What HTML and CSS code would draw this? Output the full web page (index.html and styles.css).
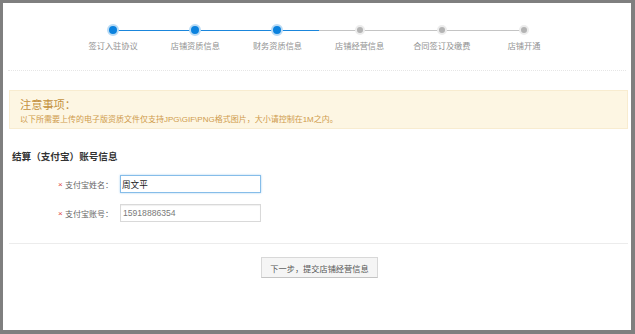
FILE: index.html
```html
<!DOCTYPE html>
<html lang="zh-CN">
<head>
    <meta charset="UTF-8">
    <meta name="viewport" content="width=device-width, initial-scale=1.0">
    <title>店铺入驻 - 财务资质信息</title>
    <link rel="stylesheet" href="styles.css">
</head>
<body>

    <div class="page">
        <!-- Progress steps -->
        <ul class="steps">
            <li class="step done"><span class="dot"></span><span class="step-label">签订入驻协议</span></li>
            <li class="step done"><span class="dot"></span><span class="step-label">店铺资质信息</span></li>
            <li class="step done current"><span class="dot"></span><span class="step-label">财务资质信息</span></li>
            <li class="step"><span class="dot"></span><span class="step-label">店铺经营信息</span></li>
            <li class="step"><span class="dot"></span><span class="step-label">合同签订及缴费</span></li>
            <li class="step"><span class="dot"></span><span class="step-label">店铺开通</span></li>
        </ul>

        <!-- Notice -->
        <div class="notice">
            <h3>注意事项：</h3>
            <p>以下所需要上传的电子版资质文件仅支持JPG\GIF\PNG格式图片，大小请控制在1M之内。</p>
        </div>

        <!-- Alipay account -->
        <h4 class="section-title">结算（支付宝）账号信息</h4>

        <div class="form-row first">
            <label for="alipayName"><i class="req">×</i>支付宝姓名：</label>
            <input type="text" id="alipayName" class="focused" value="周文平">
        </div>
        <div class="form-row">
            <label for="alipayAccount"><i class="req">×</i>支付宝账号：</label>
            <input type="text" id="alipayAccount" class="muted" value="15918886354">
        </div>

        <div class="divider"></div>

        <div class="actions">
            <button class="next-button">下一步，提交店铺经营信息</button>
        </div>
    </div>

</body>
</html>
```

FILE: styles.css
```css
* {
    box-sizing: border-box;
    margin: 0;
    padding: 0;
}

body {
    font-family: "Liberation Sans", "Noto Sans CJK SC", sans-serif;
    background-color: #7f7f7f;
    padding: 3px 4px 4px 3px;
    height: 334px;
    overflow: hidden;
}

.page {
    background-color: #ffffff;
    height: 327px;
}

/* Steps */
.steps {
    display: flex;
    list-style: none;
    height: 68px;
    margin: 0 5px;
    padding: 21px 0 0 64px;
    border-bottom: 1px dotted #e6e6e6;
}

.step {
    position: relative;
    width: 82.2px;
    display: flex;
    flex-direction: column;
    align-items: center;
}

.step::before,
.step::after {
    content: "";
    position: absolute;
    top: 5.5px;
    height: 1.5px;
    width: 50%;
    background-color: #c4c4c4;
}

.step::before {
    left: 0;
}

.step::after {
    left: 50%;
}

.step:first-child::before,
.step:last-child::after {
    display: none;
}

.step.done::before,
.step.done::after {
    background-color: #1a86dc;
}

.dot {
    position: relative;
    z-index: 1;
    width: 10px;
    height: 10px;
    margin: 1px 0;
    border-radius: 50%;
    background-color: #b3b3b3;
    border: 2px solid #ececec;
}

.step.done .dot {
    width: 12px;
    height: 12px;
    margin: 0;
    background-color: #0b82de;
    border: 2px solid #b9dbf5;
}

.step-label {
    margin-top: 5px;
    font-size: 8.2px;
    line-height: 12px;
    color: #919191;
    white-space: nowrap;
}

/* Notice */
.notice {
    height: 39px;
    margin: 19px 3px 0 6px;
    padding: 7px 10px 0;
    background-color: #fdf6e3;
    border: 1px solid #f8ecd0;
}

.notice h3 {
    font-size: 11.2px;
    line-height: 14px;
    font-weight: normal;
    color: #c4913e;
}

.notice p {
    margin-top: 2px;
    font-size: 8px;
    line-height: 11px;
    color: #cf9b4c;
    white-space: nowrap;
}

/* Form */
.section-title {
    margin: 21px 0 0 9px;
    font-size: 9.6px;
    line-height: 14px;
    color: #333333;
}

.form-row {
    display: flex;
    align-items: center;
    height: 18px;
    margin-top: 11px;
    padding-left: 55px;
}

.form-row label {
    display: flex;
    align-items: center;
    width: 62px;
    font-size: 8px;
    color: #666666;
}

.req {
    font-style: normal;
    width: 7px;
    font-size: 8px;
    color: #e0453a;
}

.form-row input {
    width: 141px;
    height: 18px;
    padding: 0 2px;
    font-family: "Liberation Sans", "Noto Sans CJK SC", sans-serif;
    font-size: 8.6px;
    color: #222222;
    border: 1px solid #d9d9d9;
    box-shadow: inset 0 1px 1px #f0f0f0;
    outline: none;
}

.form-row input.focused {
    padding-left: 1px;
    border-color: #86bde9;
    box-shadow: 0 0 2px #a9d0f0;
}

.form-row input.muted {
    color: #7a7a7a;
}

.divider {
    margin: 21px 3px 0 6px;
    border-top: 1px solid #ececec;
}

.actions {
    display: flex;
    justify-content: center;
    margin: 13px 3px 0 8px;
}

.next-button {
    width: 117px;
    height: 21px;
    font-family: "Liberation Sans", "Noto Sans CJK SC", sans-serif;
    font-size: 8.2px;
    color: #555555;
    background-color: #f5f5f5;
    border: 1px solid #d8d8d8;
    border-bottom-color: #c4c4c4;
    cursor: pointer;
}
```
